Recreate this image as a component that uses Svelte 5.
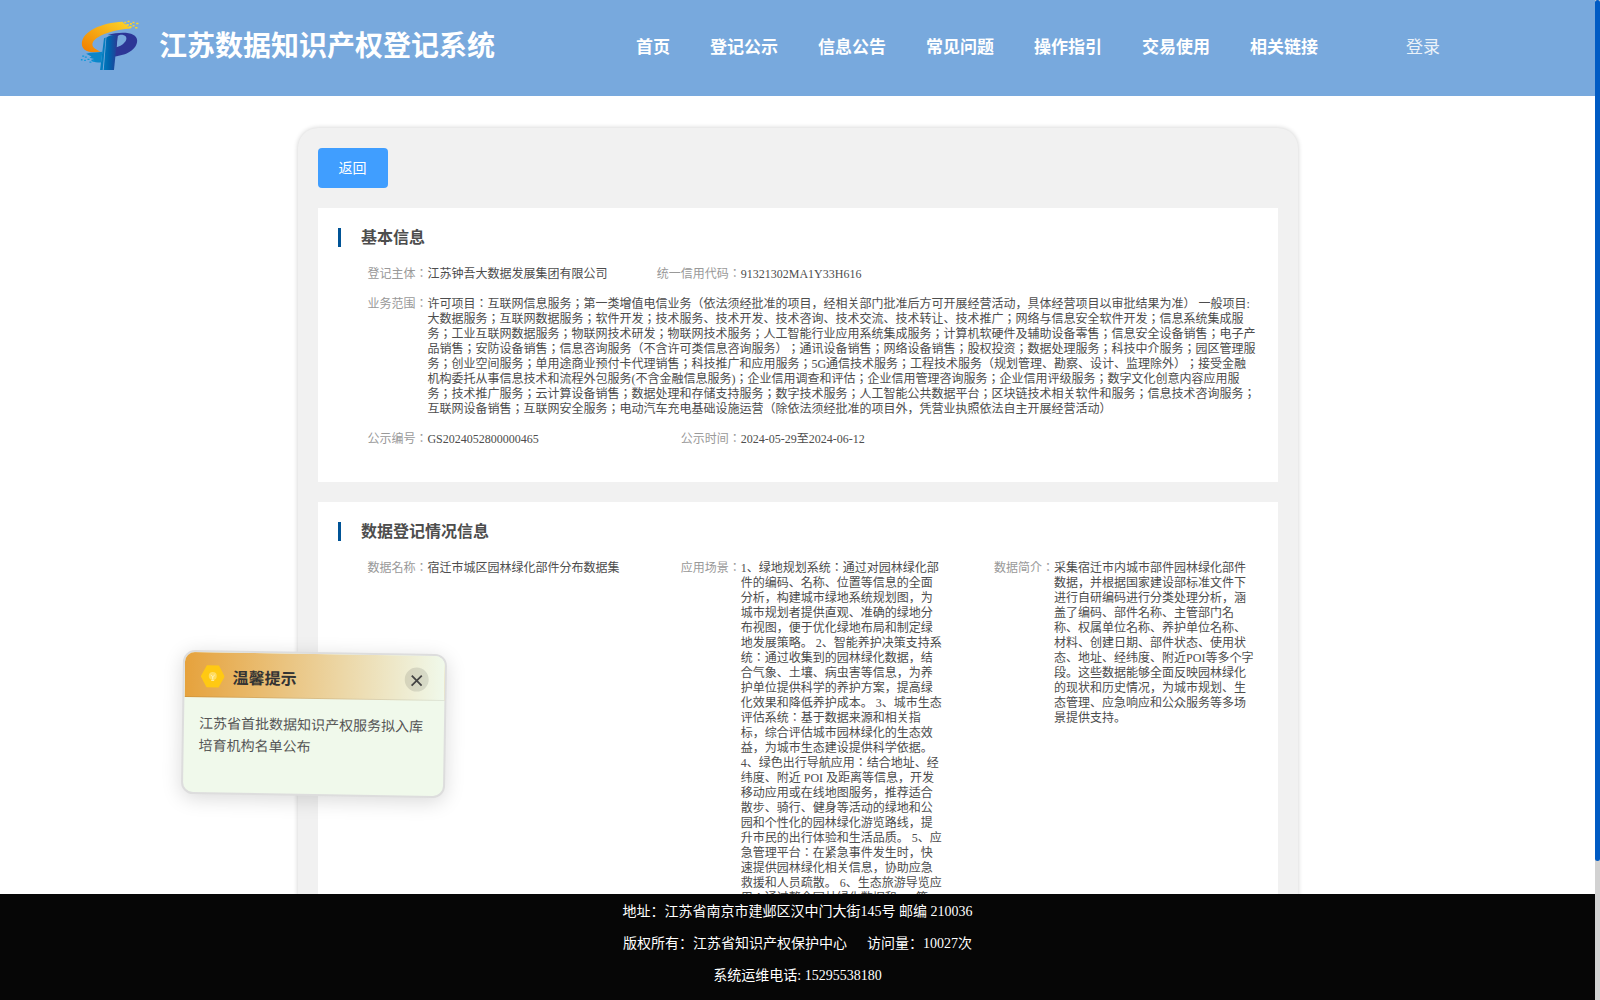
<script>
  const navItems = ["首页", "登记公示", "信息公告", "常见问题", "操作指引", "交易使用", "相关链接"];

  const scope = [
    "许可项目：互联网信息服务；第一类增值电信业务（依法须经批准的项目，经相关部门批准后方可开展经营活动，具体经营项目以审批结果为准） 一般项目:",
    "大数据服务；互联网数据服务；软件开发；技术服务、技术开发、技术咨询、技术交流、技术转让、技术推广；网络与信息安全软件开发；信息系统集成服",
    "务；工业互联网数据服务；物联网技术研发；物联网技术服务；人工智能行业应用系统集成服务；计算机软硬件及辅助设备零售；信息安全设备销售；电子产",
    "品销售；安防设备销售；信息咨询服务（不含许可类信息咨询服务）；通讯设备销售；网络设备销售；股权投资；数据处理服务；科技中介服务；园区管理服",
    "务；创业空间服务；单用途商业预付卡代理销售；科技推广和应用服务；5G通信技术服务；工程技术服务（规划管理、勘察、设计、监理除外）；接受金融",
    "机构委托从事信息技术和流程外包服务(不含金融信息服务)；企业信用调查和评估；企业信用管理咨询服务；企业信用评级服务；数字文化创意内容应用服",
    "务；技术推广服务；云计算设备销售；数据处理和存储支持服务；数字技术服务；人工智能公共数据平台；区块链技术相关软件和服务；信息技术咨询服务；",
    "互联网设备销售；互联网安全服务；电动汽车充电基础设施运营（除依法须经批准的项目外，凭营业执照依法自主开展经营活动）",
  ].join("\n");

  const scenes = [
    "1、绿地规划系统：通过对园林绿化部",
    "件的编码、名称、位置等信息的全面",
    "分析，构建城市绿地系统规划图，为",
    "城市规划者提供直观、准确的绿地分",
    "布视图，便于优化绿地布局和制定绿",
    "地发展策略。 2、智能养护决策支持系",
    "统：通过收集到的园林绿化数据，结",
    "合气象、土壤、病虫害等信息，为养",
    "护单位提供科学的养护方案，提高绿",
    "化效果和降低养护成本。 3、城市生态",
    "评估系统：基于数据来源和相关指",
    "标，综合评估城市园林绿化的生态效",
    "益，为城市生态建设提供科学依据。",
    "4、绿色出行导航应用：结合地址、经",
    "纬度、附近 POI 及距离等信息，开发",
    "移动应用或在线地图服务，推荐适合",
    "散步、骑行、健身等活动的绿地和公",
    "园和个性化的园林绿化游览路线，提",
    "升市民的出行体验和生活品质。 5、应",
    "急管理平台：在紧急事件发生时，快",
    "速提供园林绿化相关信息，协助应急",
    "救援和人员疏散。 6、生态旅游导览应",
    "用：通过整合园林绿化数据和POI等",
  ].join("\n");

  const intro = [
    "采集宿迁市内城市部件园林绿化部件",
    "数据，并根据国家建设部标准文件下",
    "进行自研编码进行分类处理分析，涵",
    "盖了编码、部件名称、主管部门名",
    "称、权属单位名称、养护单位名称、",
    "材料、创建日期、部件状态、使用状",
    "态、地址、经纬度、附近POI等多个字",
    "段。这些数据能够全面反映园林绿化",
    "的现状和历史情况，为城市规划、生",
    "态管理、应急响应和公众服务等多场",
    "景提供支持。",
  ].join("\n");

  const sections = [
    {
      title: "基本信息",
      rows: [
        [
          { label: "登记主体", value: "江苏钟吾大数据发展集团有限公司" },
          { label: "统一信用代码", value: "91321302MA1Y33H616" },
        ],
        [{ label: "业务范围", value: scope, wide: true }],
        [
          { label: "公示编号", value: "GS2024052800000465" },
          { label: "公示时间", value: "2024-05-29至2024-06-12" },
        ],
      ],
    },
    {
      title: "数据登记情况信息",
      rows: [
        [
          { label: "数据名称", value: "宿迁市城区园林绿化部件分布数据集" },
          { label: "应用场景", value: scenes },
          { label: "数据简介", value: intro },
        ],
      ],
    },
  ];

  let showTip = $state(true);
</script>

<div class="page">
  <header>
    <svg class="logo" viewBox="60 55 180 160">
      <defs>
        <linearGradient id="orange" x1="0" y1="1" x2="1" y2="0">
          <stop offset="0" stop-color="#f07c00" />
          <stop offset="1" stop-color="#fdd628" />
        </linearGradient>
        <linearGradient id="blue" x1="0" y1="0" x2="1" y2="0">
          <stop offset="0" stop-color="#0079bd" />
          <stop offset="0.4" stop-color="#0063ad" />
          <stop offset="1" stop-color="#2a3a94" />
        </linearGradient>
      </defs>
      <path
        fill="url(#orange)"
        d="M122 153C82 160 65 148 65 130C65 92 125 66 188 63L194 70L202 72L202 77L212 80L213 84C165 86 112 104 99 124C91 138 106 148 122 153Z"
      />
      <path
        fill="#fbd32a"
        d="M193 63h6v5h-6zM203 60h6v5h-6zM200 70h7v5h-7zM210 67h6v5h-6zM218 63h6v5h-6zM229 66h7v5h-7zM208 76h7v6h-7zM218 73h6v5h-6zM226 79h7v5h-7z"
      />
      <path
        fill="#2d3696"
        fill-rule="evenodd"
        d="M143 103C190 90 232 96 232 120C232 148 198 165 164 168L160 105ZM173 106L170 140C192 135 212 110 190 103C184 101 178 103 173 106Z"
      />
      <path fill="url(#blue)" d="M139 111C149 104 161 102 173 103L162 209H131Z" />
      <path fill="#067ec0" d="M132 113L137 111L128 209H120Z" />
      <path fill="#0c86c8" d="M78 160C94 154 110 158 127 154L123 186C108 188 98 185 92 179L102 176L88 172L94 168Z" />
      <path
        fill="#0c9adb"
        d="M66 165h6v4h-6zM74 168h6v4h-6zM62 176h5v4h-5zM82 175h6v4h-6zM72 178h5v4h-5zM88 183h6v4h-6zM97 180h6v4h-6z"
      />
    </svg>
    <h1>江苏数据知识产权登记系统</h1>
    <nav>
      {#each navItems as item}
        <span>{item}</span>
      {/each}
    </nav>
    <span class="login">登录</span>
  </header>

  <main>
    <button class="back">返回</button>
    {#each sections as section}
      <section>
        <h2>{section.title}</h2>
        <div class="rows">
          {#each section.rows as row}
            <div class="row">
              {#each row as cell}
                <div class="cell" class:wide={cell.wide}>
                  <div class="label">{cell.label}：</div>
                  <div class="value">{cell.value}</div>
                </div>
              {/each}
            </div>
          {/each}
        </div>
      </section>
    {/each}
  </main>

  <footer>
    <p>地址：江苏省南京市建邺区汉中门大街145号 邮编 210036</p>
    <p>版权所有：江苏省知识产权保护中心<span class="visits">访问量：10027次</span></p>
    <p>系统运维电话: 15295538180</p>
  </footer>

  <div class="scrollbar"><div class="thumb"></div></div>

  {#if showTip}
    <div class="tip">
      <div class="tip-head">
        <svg class="hex" viewBox="0 0 24 24">
          <path fill="#ffc913" d="M6 1H18L24 12L18 23H6L0 12Z" />
          <circle cx="12" cy="11.5" r="4" fill="#ffdc60" />
          <path fill="none" stroke="#fff6cc" stroke-width="0.8" d="M10 10.5L12 12.5L14 10.5M12 12.5V15M10.5 16H13.5" />
        </svg>
        <strong>温馨提示</strong>
        <button class="close" aria-label="关闭" onclick={() => (showTip = false)}>
          <svg viewBox="0 0 24 24">
            <path fill="none" stroke="#444" stroke-width="1.8" d="M7 8L17 18M17 8L7 18" />
          </svg>
        </button>
      </div>
      <div class="tip-body">江苏省首批数据知识产权服务拟入库<br />培育机构名单公布</div>
    </div>
  {/if}
</div>

<style>
  :global(body) {
    margin: 0;
    overflow: hidden;
  }
  .page,
  .page button {
    font-family: "Liberation Serif", "Noto Sans CJK SC", serif;
  }
  .page {
    position: relative;
    height: 1000px;
    overflow: hidden;
    background: #fff;
    color: #4d4d4d;
    text-spacing-trim: space-all;
  }
  header {
    display: flex;
    align-items: center;
    height: 96px;
    padding-left: 80px;
    background: #78a9dd;
    color: #fff;
    white-space: nowrap;
  }
  .logo {
    width: 60px;
    height: 53px;
    margin-top: -6px;
  }
  h1 {
    width: 477px;
    margin: -3px 0 0 19px;
    font-size: 28px;
    line-height: 40px;
  }
  nav {
    display: flex;
    gap: 40px;
    font-size: 17px;
    font-weight: bold;
    line-height: 24px;
  }
  .login {
    margin-left: 88px;
    font-size: 17px;
    line-height: 24px;
    opacity: 0.85;
  }
  main {
    box-sizing: border-box;
    width: 1000px;
    height: 1100px;
    margin: 32px 0 0 298px;
    padding: 20px;
    border-radius: 20px;
    background: #f1f1f1;
    box-shadow: 0 0 5px rgba(0, 0, 0, 0.2);
  }
  .back {
    display: block;
    width: 70px;
    height: 40px;
    padding: 0 1px 2px 0;
    border: 0;
    border-radius: 4px;
    background: #409eff;
    color: #fff;
    font-size: 14px;
  }
  section {
    box-sizing: border-box;
    min-height: 274px;
    margin-top: 20px;
    padding: 20px 0 35px;
    background: #fff;
  }
  h2 {
    margin: 0 0 0 20px;
    padding-left: 20px;
    border-left: 3px solid #005396;
    font-size: 16px;
    line-height: 19px;
  }
  /* the JP face centres ： and ； in their cells */
  .rows {
    display: flex;
    flex-direction: column;
    gap: 15px;
    width: 940px;
    margin-top: 20px;
    font-family: "Liberation Serif", "Noto Sans CJK JP", serif;
    font-size: 12px;
    line-height: 15px;
  }
  .row {
    display: grid;
    grid-template-columns: repeat(3, 1fr);
  }
  .cell {
    display: flex;
    min-width: 0;
  }
  .wide {
    grid-column: 1 / 4;
  }
  .label {
    flex: 0 0 109.4px;
    color: #999;
    text-align: right;
    white-space: nowrap;
  }
  .value {
    white-space: pre;
  }
  footer {
    position: absolute;
    left: 0;
    right: 5px;
    bottom: 0;
    height: 104px;
    padding-top: 2px;
    background: #060606;
    color: #fff;
    font-size: 14px;
    line-height: 32px;
    text-align: center;
  }
  footer p {
    margin: 0;
  }
  .visits {
    margin-left: 20px;
  }
  .scrollbar {
    position: absolute;
    top: 0;
    right: 0;
    width: 5px;
    height: 1000px;
    background: #d2d2d2;
  }
  .thumb {
    height: 861px;
    border-radius: 3px;
    background: #005bc4;
  }
  .tip {
    position: absolute;
    left: 182px;
    top: 652px;
    box-sizing: border-box;
    width: 264px;
    height: 144px;
    border: 2px solid #ddd;
    border-radius: 12px;
    background: #f0f9eb;
    box-shadow: 0 4px 20px rgba(0, 0, 0, 0.15);
    overflow: hidden;
    transform: rotate(0.9deg);
  }
  .tip-head {
    display: flex;
    align-items: center;
    box-sizing: border-box;
    height: 45px;
    padding: 3px 16px 0;
    border-bottom: 1px solid rgba(0, 0, 0, 0.08);
    background: linear-gradient(90deg, #e6a23c, #f0f9eb);
    color: #333;
    font-size: 16px;
  }
  .hex {
    width: 24px;
    height: 24px;
    margin-right: 8px;
  }
  .close {
    width: 24px;
    height: 24px;
    margin-left: auto;
    padding: 0;
    border: 0;
    border-radius: 50%;
    background: rgba(0, 0, 0, 0.1);
  }
  .close svg {
    display: block;
  }
  .tip-body {
    padding: 16px 15px 15px;
    color: #555;
    font-size: 14px;
    line-height: 22.4px;
    white-space: nowrap;
  }
</style>
